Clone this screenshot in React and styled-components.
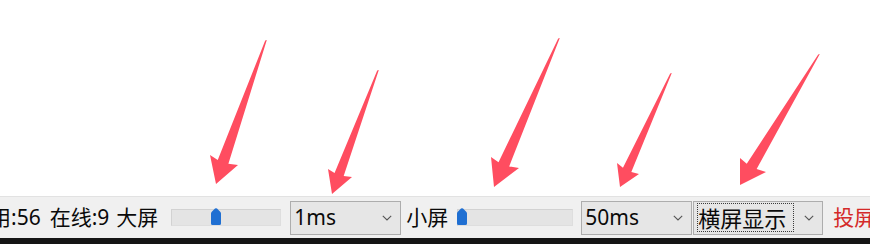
import React from "react";
import styled, { createGlobalStyle } from "styled-components";

const Global = createGlobalStyle`
  html, body { margin: 0; padding: 0; background: #ffffff; }
  body { font-family: "Noto Sans", "Noto Sans CJK SC", sans-serif; }
`;

const Page = styled.div`
  position: relative;
  width: 870px;
  height: 244px;
  display: flex;
  flex-direction: column;
  overflow: hidden;
  background: #ffffff;
`;

const Canvas = styled.div`
  flex: 1;
  background: #ffffff;
`;

const StatusBar = styled.div`
  height: 41px;
  border-top: 1px solid #e2e2e2;
  background: #f0f0f0;
  display: flex;
  align-items: center;
  white-space: nowrap;
  overflow: hidden;
`;

const BottomStrip = styled.div`
  height: 6px;
  background: #151515;
`;

const Label = styled.span`
  flex: none;
  margin-left: ${(p) => p.$ml}px;
  font-size: 21px;
  line-height: 1;
  color: ${(p) => (p.$red ? "#d42a2a" : "#0a0a0a")};
  font-family: "Noto Sans", "Noto Sans CJK SC", sans-serif;
`;

const Track = styled.div`
  flex: none;
  position: relative;
  margin-left: ${(p) => p.$ml}px;
  width: ${(p) => p.$w}px;
  height: 17px;
  box-sizing: border-box;
  background: #e4e4e4;
  border: 1px solid #d2d2d2;
  border-right-color: #dedede;
  border-bottom-color: #dedede;
`;

const Thumb = styled.svg`
  position: absolute;
  top: -2px;
  width: 10px;
  height: 17px;
`;

const Combo = styled.div`
  flex: none;
  margin-left: ${(p) => p.$ml}px;
  width: ${(p) => p.$w}px;
  height: 34px;
  box-sizing: border-box;
  border: 1px solid #adadad;
  background: #e6e6e6;
  display: flex;
  align-items: center;
  padding: 0 8px 0 3px;
`;

const ComboText = styled.span`
  flex: 1;
  font-size: 21px;
  line-height: 1;
  color: #0a0a0a;
  font-family: "Noto Sans", "Noto Sans CJK SC", sans-serif;
`;

const FocusText = styled.span`
  flex: none;
  width: 97px;
  height: 29px;
  box-sizing: border-box;
  border: 1px dotted #3a3a3a;
  display: flex;
  align-items: center;
  font-size: 22px;
  line-height: 1;
  color: #0a0a0a;
  font-family: "Noto Sans", "Noto Sans CJK SC", sans-serif;
`;

const Spacer = styled.span`
  flex: 1;
`;

const Chevron = styled.svg`
  flex: none;
  width: 10px;
  height: 6px;
`;

const Overlay = styled.svg`
  position: absolute;
  left: 0;
  top: 0;
  width: 870px;
  height: 244px;
  pointer-events: none;
`;

const ChevronIcon = () => (
  <Chevron viewBox="0 0 10 6">
    <path d="M0.8 0.8 L5 5 L9.2 0.8" fill="none" stroke="#555" strokeWidth="1.1" />
  </Chevron>
);

const ThumbIcon = ({ left }) => (
  <Thumb viewBox="0 0 10 17" style={{ left }}>
    <path d="M0 5.5 Q0 4.5 1 3.6 L4 0.6 Q5 -0.2 6 0.6 L9 3.6 Q10 4.5 10 5.5 V15.5 Q10 17 8.5 17 H1.5 Q0 17 0 15.5 Z" fill="#1f6fd2" />
  </Thumb>
);

const arrows = [
  { t: [266, 40], l: [210, 155], p: [216, 184], r: [238, 165] },
  { t: [378, 70], l: [328, 169], p: [332, 194], r: [352, 177] },
  { t: [559, 38], l: [491, 157], p: [494, 187], r: [519, 168] },
  { t: [671, 73], l: [617, 163], p: [620, 187], r: [639, 174] },
  { t: [819, 54], l: [740, 158], p: [740, 185], r: [766, 172] },
];

const arrowPoints = ({ t, l, p, r }) => {
  const lerp = (a, b, k) => [a[0] + (b[0] - a[0]) * k, a[1] + (b[1] - a[1]) * k];
  const il = lerp(l, r, 0.3);
  const ir = lerp(l, r, 0.68);
  const mid = lerp(l, r, 0.5);
  const dx = (p[0] - mid[0]) * 0.08;
  const dy = (p[1] - mid[1]) * 0.08;
  const pts = [
    [t[0] + 0.8, t[1]],
    [ir[0] + dx, ir[1] + dy],
    r,
    p,
    l,
    [il[0] + dx, il[1] + dy],
    [t[0] - 0.8, t[1] + 0.5],
  ];
  return pts.map((q) => q.join(",")).join(" ");
};

export default function App() {
  return (
    <>
      <Global />
      <Page>
        <Canvas />
        <StatusBar>
          <Label $ml={-10}>用:56</Label>
          <Label $ml={9}>在线:9</Label>
          <Label $ml={7}>大屏</Label>
          <Track $ml={13} $w={110}>
            <ThumbIcon left={39} />
          </Track>
          <Combo $ml={9} $w={111}>
            <ComboText>1ms</ComboText>
            <ChevronIcon />
          </Combo>
          <Label $ml={5}>小屏</Label>
          <Track $ml={9} $w={116}>
            <ThumbIcon left={-1} />
          </Track>
          <Combo $ml={8} $w={111}>
            <ComboText>50ms</ComboText>
            <ChevronIcon />
          </Combo>
          <Combo $ml={1} $w={130}>
            <FocusText>横屏显示</FocusText>
            <Spacer />
            <ChevronIcon />
          </Combo>
          <Label $ml={10} $red>投屏</Label>
        </StatusBar>
        <BottomStrip />
        <Overlay viewBox="0 0 870 244">
          {arrows.map((a, i) => (
            <polygon key={i} points={arrowPoints(a)} fill="#ff4d60" />
          ))}
        </Overlay>
      </Page>
    </>
  );
}
